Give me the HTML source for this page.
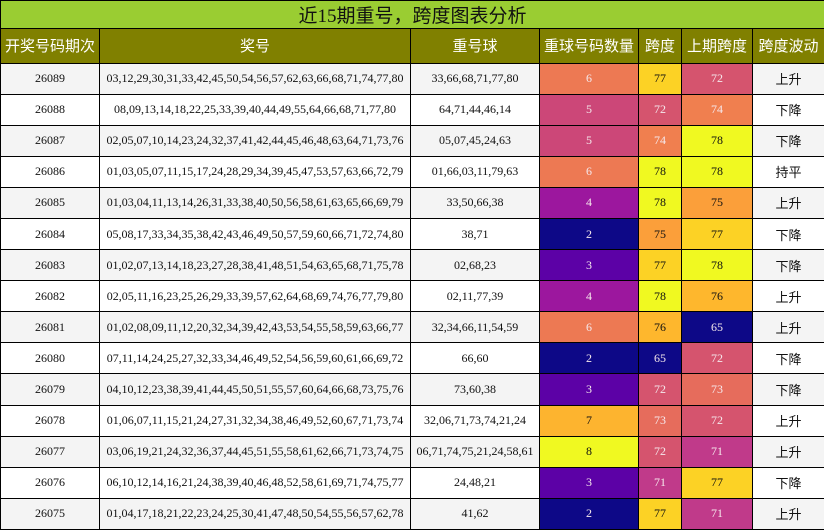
<!DOCTYPE html><html><head><meta charset="utf-8"><style>
body{margin:0;width:824px;height:529px;overflow:hidden;background:#fff}
table{border-collapse:collapse;width:824px;table-layout:fixed;font-family:"Liberation Serif","Noto Serif CJK SC",serif;font-size:12px}
td,th{border:1.5px solid #000;text-align:center;padding:0;overflow:hidden;white-space:nowrap}
.t td{background:#9acd32;height:26.5px;font-family:"Liberation Serif","Noto Sans CJK SC",sans-serif;font-size:19px;color:#111}
th{background:#808000;color:#fff;font-weight:normal;font-size:15px;height:33.5px;font-family:"Liberation Sans","Noto Sans CJK SC",sans-serif}
tr.r td{height:30.1px;color:#111}
tr.r:nth-child(odd) td{background:#f4f4f4}
tr.r:nth-child(even) td{background:#fff}
td.fl{font-family:"Liberation Sans","Noto Sans CJK SC",sans-serif;font-size:13px}
tr.r td.w{color:#f5e8ec}
</style></head><body>
<table>
<colgroup><col style="width:99px"><col style="width:311px"><col style="width:129px"><col style="width:99px"><col style="width:43px"><col style="width:71px"><col style="width:72px"></colgroup>
<tr class="t"><td colspan="7">近15期重号，跨度图表分析</td></tr>
<tr><th>开奖号码期次</th><th>奖号</th><th>重号球</th><th>重球号码数量</th><th>跨度</th><th>上期跨度</th><th>跨度波动</th></tr>
<tbody id="b"></tbody>
</table>
<script>
var C={2:'#0d0887',3:'#5c01a6',4:'#9c179e',5:'#cc4778',6:'#ed7953',7:'#fdb42f',8:'#f0f921'};
var S={65:'#0d0887',71:'#c03a8a',72:'#d5546e',73:'#e66c5c',74:'#f07f4f',75:'#fb9f3a',76:'#feb72d',77:'#fcd225',78:'#f0f921'};
var dark={2:1,3:1,4:1,5:1,6:1,65:1,71:1,72:1,73:1,74:1};
var d=[
['26089','03,12,29,30,31,33,42,45,50,54,56,57,62,63,66,68,71,74,77,80','33,66,68,71,77,80',6,77,72,'上升'],
['26088','08,09,13,14,18,22,25,33,39,40,44,49,55,64,66,68,71,77,80','64,71,44,46,14',5,72,74,'下降'],
['26087','02,05,07,10,14,23,24,32,37,41,42,44,45,46,48,63,64,71,73,76','05,07,45,24,63',5,74,78,'下降'],
['26086','01,03,05,07,11,15,17,24,28,29,34,39,45,47,53,57,63,66,72,79','01,66,03,11,79,63',6,78,78,'持平'],
['26085','01,03,04,11,13,14,26,31,33,38,40,50,56,58,61,63,65,66,69,79','33,50,66,38',4,78,75,'上升'],
['26084','05,08,17,33,34,35,38,42,43,46,49,50,57,59,60,66,71,72,74,80','38,71',2,75,77,'下降'],
['26083','01,02,07,13,14,18,23,27,28,38,41,48,51,54,63,65,68,71,75,78','02,68,23',3,77,78,'下降'],
['26082','02,05,11,16,23,25,26,29,33,39,57,62,64,68,69,74,76,77,79,80','02,11,77,39',4,78,76,'上升'],
['26081','01,02,08,09,11,12,20,32,34,39,42,43,53,54,55,58,59,63,66,77','32,34,66,11,54,59',6,76,65,'上升'],
['26080','07,11,14,24,25,27,32,33,34,46,49,52,54,56,59,60,61,66,69,72','66,60',2,65,72,'下降'],
['26079','04,10,12,23,38,39,41,44,45,50,51,55,57,60,64,66,68,73,75,76','73,60,38',3,72,73,'下降'],
['26078','01,06,07,11,15,21,24,27,31,32,34,38,46,49,52,60,67,71,73,74','32,06,71,73,74,21,24',7,73,72,'上升'],
['26077','03,06,19,21,24,32,36,37,44,45,51,55,58,61,62,66,71,73,74,75','06,71,74,75,21,24,58,61',8,72,71,'上升'],
['26076','06,10,12,14,16,21,24,38,39,40,46,48,52,58,61,69,71,74,75,77','24,48,21',3,71,77,'下降'],
['26075','01,04,17,18,21,22,23,24,25,30,41,47,48,50,54,55,56,57,62,78','41,62',2,77,71,'上升']];
var h='';d.forEach(function(r){
function c(v,m){return '<td class="'+(dark[v]?'w':'')+'" style="background:'+m[v]+'">'+v+'</td>';}
h+='<tr class="r"><td>'+r[0]+'</td><td>'+r[1]+'</td><td>'+r[2]+'</td>'+c(r[3],C)+c(r[4],S)+c(r[5],S)+'<td class="fl">'+r[6]+'</td></tr>';});
document.getElementById('b').innerHTML=h;
</script>
</body></html>
